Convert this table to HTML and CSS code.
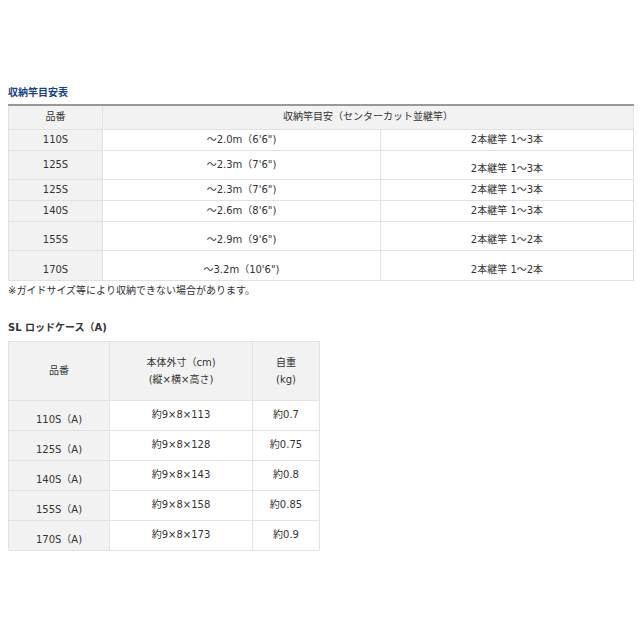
FILE: index.html
```html
<!DOCTYPE html>
<html lang="ja">
<head>
<meta charset="utf-8">
<link rel="stylesheet" href="styles.css">
</head>
<body>
<div class="page">
  <h2 class="title-blue">収納竿目安表</h2>
  <table class="t1">
    <colgroup><col class="c1"><col class="c2"><col class="c3"></colgroup>
    <tr class="h24"><th class="gray">品番</th><th class="gray" colspan="2">収納竿目安（センターカット並継竿）</th></tr>
    <tr class="h21"><td class="gray">110S</td><td>～2.0m（6'6")</td><td>2本継竿 1～3本</td></tr>
    <tr class="h29"><td class="gray">125S</td><td>～2.3m（7'6")</td><td class="low">2本継竿 1～3本</td></tr>
    <tr class="h21"><td class="gray">125S</td><td>～2.3m（7'6")</td><td>2本継竿 1～3本</td></tr>
    <tr class="h21"><td class="gray">140S</td><td>～2.6m（8'6")</td><td>2本継竿 1～3本</td></tr>
    <tr class="h29 lowrow"><td class="gray">155S</td><td>～2.9m（9'6")</td><td>2本継竿 1～2本</td></tr>
    <tr class="h30 lowrow"><td class="gray">170S</td><td>～3.2m（10'6")</td><td>2本継竿 1～2本</td></tr>
  </table>
  <p class="note">※ガイドサイズ等により収納できない場合があります。</p>
  <h2 class="title-dark">SL ロッドケース（A)</h2>
  <table class="t2">
    <colgroup><col class="d1"><col class="d2"><col class="d3"></colgroup>
    <tr class="h59"><th class="gray">品番</th><th class="gray">本体外寸（cm)<br>(縦×横×高さ)</th><th class="gray">自重<br>(kg)</th></tr>
    <tr class="h30"><td class="gray low">110S（A)</td><td>約9×8×113</td><td>約0.7</td></tr>
    <tr class="h30"><td class="gray low">125S（A)</td><td>約9×8×128</td><td>約0.75</td></tr>
    <tr class="h30"><td class="gray low">140S（A)</td><td>約9×8×143</td><td>約0.8</td></tr>
    <tr class="h30"><td class="gray low">155S（A)</td><td>約9×8×158</td><td>約0.85</td></tr>
    <tr class="h30"><td class="gray low">170S（A)</td><td>約9×8×173</td><td>約0.9</td></tr>
  </table>
</div>
</body>
</html>
```

FILE: styles.css
```css
html, body {
  margin: 0;
  padding: 0;
  background: #ffffff;
}
.page {
  padding: 86px 7px 0 8px;
  font-family: "DejaVu Sans", "Noto Sans CJK JP", sans-serif;
  font-size: 10px;
  color: #333333;
}
.title-blue, .title-dark {
  margin: 0;
  font-size: 10px;
  line-height: 14px;
  font-weight: bold;
}
.title-blue {
  color: #1b3f7f;
  margin-bottom: 4px;
}
.title-dark {
  color: #333333;
  margin-top: 23px;
  margin-bottom: 6px;
}
table {
  border-collapse: collapse;
  table-layout: fixed;
}
.t1 {
  width: 625px;
  border-top: 2px solid #999999;
}
.t2 {
  width: 311px;
}
.c1 { width: 94px; }
.c2 { width: 278px; }
.c3 { width: 253px; }
.d1 { width: 101px; }
.d2 { width: 143px; }
.d3 { width: 67px; }
th, td {
  border: 1px solid #e2e2e2;
  padding: 0;
  text-align: center;
  vertical-align: middle;
  font-weight: normal;
  line-height: 14px;
}
.t1 tr:first-child th {
  border-top: 2px solid #999999;
}
.t2 th {
  line-height: 17px;
}
.gray {
  background: #f2f2f2;
}
.h21 { height: 21px; }
.h24 { height: 24px; }
.h29 { height: 29px; }
.h30 { height: 30px; }
.h59 { height: 59px; }
.low {
  vertical-align: bottom;
  padding-bottom: 3px;
}
.lowrow td {
  vertical-align: bottom;
  padding-bottom: 3px;
}
.note {
  margin: 3px 0 0 0;
  line-height: 14px;
}
```
